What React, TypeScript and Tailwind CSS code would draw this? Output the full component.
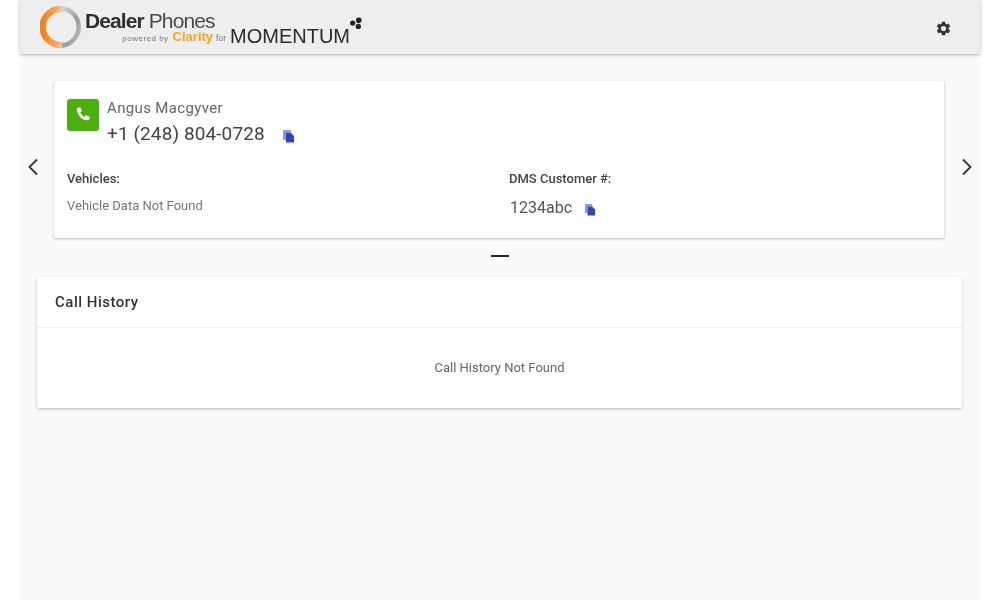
import React from "react";

function CopyIcon({ className }: { className: string }) {
  return (
    <svg viewBox="0 0 14 14" className={className}>
      <rect x="1" y="1" width="8" height="10" rx="1" fill="#8d9ad6" />
      <path d="M4 4h5l3 3v6.500H4z" fill="#2c47b8" />
    </svg>
  );
}

function Logo() {
  return (
    <div className="flex items-start ml-[20px] h-full">
      <svg viewBox="0 0 42 42" className="w-[42px] h-[42px] mt-[6px]">
        <defs>
          <linearGradient id="g1" x1="0" y1="0" x2="1" y2="0">
            <stop offset="0" stopColor="#ee8420" />
            <stop offset="0.6" stopColor="#f5a55a" />
            <stop offset="1" stopColor="#e8d8c8" />
          </linearGradient>
          <linearGradient id="g2" x1="0" y1="0" x2="1" y2="1">
            <stop offset="0" stopColor="#d4d4d4" />
            <stop offset="0.6" stopColor="#9a9a9a" />
            <stop offset="1" stopColor="#c8c8c8" />
          </linearGradient>
        </defs>
        <path d="M24 3.300A18 18 0 1 0 24 38.700" fill="none" stroke="url(#g1)" strokeWidth="6.500" />
        <path d="M22 2.400A18.700 18.700 0 0 1 22 39.600" fill="none" stroke="url(#g2)" strokeWidth="4.500" />
      </svg>
      <div className="ml-[3px] mt-[11px] w-[141px]">
        <div className="text-[21px] leading-[20px] tracking-[-0.9px] text-[#2f2f2f] font-['Liberation_Sans',sans-serif] whitespace-nowrap">
          <span className="font-bold">Dealer</span> <span className="text-[#4a4a4a]">Phones</span>
        </div>
        <div className="flex items-baseline justify-end whitespace-nowrap font-['Liberation_Sans',sans-serif]">
          <span className="text-[8px] leading-[12px] tracking-[0.5px] text-[#777]">powered by</span>
          <span className="text-[13px] leading-[12px] font-bold text-[#f4a51c] ml-[4px]">Clarity</span>
          <span className="text-[8.500px] leading-[12px] text-[#777] ml-[3px]">for</span>
        </div>
      </div>
      <div className="relative mt-[24px] ml-[4px]">
        <span className="text-[20px] leading-[24px] text-[#2a2a2a] font-['Liberation_Sans',sans-serif] whitespace-nowrap">MOMENTUM</span>
        <svg viewBox="0 0 16 16" className="absolute right-[-13px] top-[-7px] w-[15px] h-[15px]">
          <circle cx="5" cy="6.500" r="2.800" fill="#222" />
          <circle cx="11.500" cy="3.500" r="3" fill="#222" />
          <circle cx="11" cy="10" r="2.800" fill="#222" />
        </svg>
      </div>
    </div>
  );
}

function Chevron({ d }: { d: string }) {
  return (
    <svg viewBox="0 0 12 18" className="w-[12px] h-[18px]">
      <path d={d} fill="none" stroke="#333" strokeWidth="1.800" />
    </svg>
  );
}

export default function App() {
  return (
    <div className="w-[1000px] h-[600px] overflow-hidden bg-white font-['Roboto',sans-serif] blur-[0.35px]">
      <div className="w-[960px] h-full mx-auto bg-[#fafafa] flex flex-col">
        <header className="h-[54px] shrink-0 bg-[#eeeeee] flex items-start justify-between shadow-[0_1px_3px_rgba(0,0,0,0.3)]">
          <Logo />
          <svg viewBox="0 0 24 24" className="w-[17px] h-[17px] mr-[28px] mt-[20px]">
            <path
              fill="#333"
              d="M19.140 12.940c.04-.3.06-.61.06-.94 0-.32-.02-.64-.07-.94l2.030-1.580a.49.49 0 0 0 .12-.61l-1.920-3.320a.49.49 0 0 0-.59-.22l-2.390.96c-.5-.38-1.030-.7-1.620-.94l-.36-2.540a.48.48 0 0 0-.48-.41h-3.840c-.24 0-.43.17-.47.41l-.36 2.540c-.59.24-1.130.57-1.620.94l-2.390-.96c-.22-.08-.47 0-.59.22L2.740 8.870c-.12.21-.08.47.12.61l2.030 1.580c-.05.3-.09.63-.09.94s.02.64.07.94l-2.030 1.580a.49.49 0 0 0-.12.61l1.920 3.320c.12.22.37.29.59.22l2.390-.96c.5.38 1.030.7 1.620.94l.36 2.540c.05.24.24.41.48.41h3.840c.24 0 .44-.17.47-.41l.36-2.540c.59-.24 1.130-.56 1.620-.94l2.390.96c.22.08.47 0 .59-.22l1.920-3.320c.12-.22.07-.47-.12-.61l-2.010-1.580zM12 15.600A3.600 3.600 0 1 1 12 8.400a3.600 3.600 0 0 1 0 7.200z"
            />
          </svg>
        </header>

        <div className="flex items-center mt-[27px]">
          <div className="w-[34px] pl-[7px] pt-[15px]">
            <Chevron d="M10 1.500 2.500 9l7.500 7.500" />
          </div>
          <section className="w-[890px] h-[157px] bg-white rounded-[2px] shadow-[0_1px_3px_rgba(0,0,0,0.25)] px-[13px] pt-[18px]">
            <div className="flex">
              <div className="w-[32px] h-[32px] rounded-[3px] bg-[#4caf10] flex items-center justify-center">
                <svg viewBox="0 0 24 24" className="w-[22px] h-[22px]">
                  <path
                    fill="#fff"
                    d="M6.600 4.200 9 3.600l1.800 4.200-1.900 1.600c.9 2 2.700 3.800 4.700 4.700l1.600-1.900 4.200 1.800-.6 2.400c-.2.900-1 1.500-1.900 1.400C10.500 17.300 6.700 13.500 5.200 6.100c-.1-.9.500-1.700 1.400-1.900z"
                  />
                </svg>
              </div>
              <div className="ml-[8px] mt-[-1px]">
                <div className="text-[15px] leading-[20px] tracking-[0.35px] text-[#666]">Angus Macgyver</div>
                <div className="flex items-center mt-[4px]">
                  <span className="text-[19px] leading-[24px] tracking-[0.1px] text-[#444]">+1 (248) 804-0728</span>
                  <CopyIcon className="w-[14px] h-[14px] ml-[17px] mt-[3px]" />
                </div>
              </div>
            </div>
            <div className="flex mt-[25px]">
              <div className="w-[442px]">
                <div className="text-[13px] leading-[16px] font-medium text-[#444]">Vehicles:</div>
                <div className="text-[13px] leading-[16px] text-[#777] mt-[11px]">Vehicle Data Not Found</div>
              </div>
              <div>
                <div className="text-[13px] leading-[16px] font-medium text-[#444]">DMS Customer #:</div>
                <div className="flex items-center mt-[11px]">
                  <span className="text-[16px] leading-[20px] text-[#555] ml-[1px]">1234abc</span>
                  <CopyIcon className="w-[13px] h-[13px] ml-[12px] mt-[3px]" />
                </div>
              </div>
            </div>
          </section>
          <div className="w-[36px] pl-[17px] pt-[15px]">
            <Chevron d="M2 1.500 9.500 9 2 16.500" />
          </div>
        </div>

        <div className="w-[18px] h-[2px] bg-[#222] mx-auto mt-[17px]" />

        <section className="mt-[20px] ml-[17px] mr-[18px] h-[131px] bg-white rounded-[2px] shadow-[0_1px_3px_rgba(0,0,0,0.25)]">
          <div className="h-[51px] border-b border-[#eeeeee] flex items-center px-[18px]">
            <span className="text-[15px] tracking-[0.5px] text-[#333] font-medium">Call History</span>
          </div>
          <div className="h-[80px] flex items-center justify-center">
            <span className="text-[13px] text-[#666]">Call History Not Found</span>
          </div>
        </section>
      </div>
    </div>
  );
}
